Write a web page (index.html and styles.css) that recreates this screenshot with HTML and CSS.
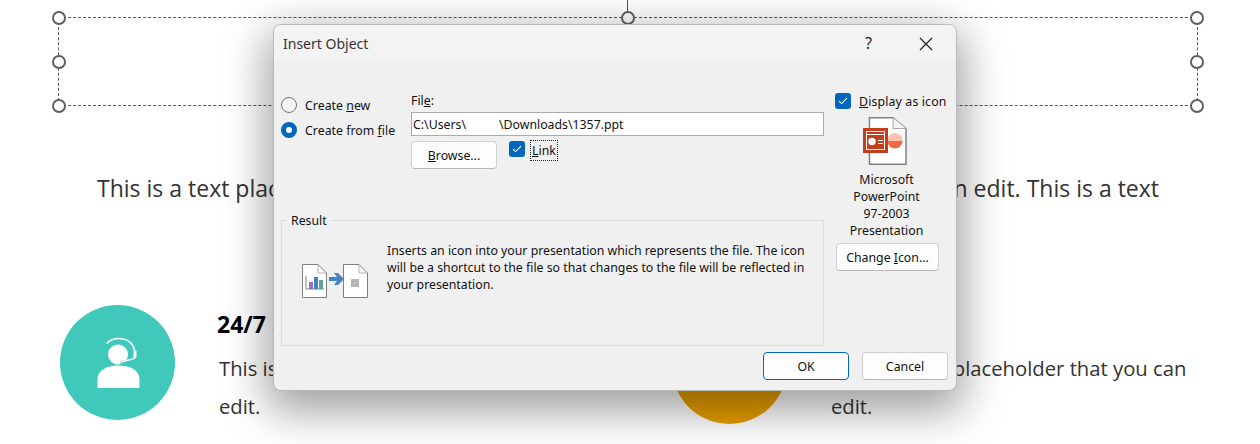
FILE: index.html
```html
<!DOCTYPE html>
<html lang="en">
<head>
<meta charset="utf-8">
<title>Insert Object</title>
<link rel="stylesheet" href="styles.css">
</head>
<body>
<main class="slide">
  <div class="selection"></div>
  <div class="rotate-line"></div>
  <span class="handle h-tl"></span><span class="handle h-tc"></span><span class="handle h-tr"></span>
  <span class="handle h-ml"></span><span class="handle h-mr"></span>
  <span class="handle h-bl"></span><span class="handle h-br"></span>
  <p class="slide-lead"><span>This is a text placeholder</span><span>that you can edit. This is a text</span></p>
  <div class="teal-circle">
    <svg width="46" height="54" viewBox="94.500 335.500 46 54">
      <path d="M97 387.500V379C97 370 106 365 118 365S139 370 139 379V387.500Z" fill="#fff"/>
      <circle cx="117.500" cy="354" r="10" fill="#fff"/>
      <path d="M106 343C109 340 114 338 118 338C127 338 133 343 134 350" fill="none" stroke="#fff" stroke-width="1.600"/>
      <path d="M136 356C134 360 130 361 120 363" fill="none" stroke="#40c9bb" stroke-width="5"/>
      <path d="M135 356C134 358 132 359 130 359L120 361.500" fill="none" stroke="#fff" stroke-width="1.600"/>
      <rect x="133" y="350" width="3" height="7" rx="1" fill="#fff"/>
    </svg>
  </div>
  <h2 class="feature-title">24/7 Support</h2>
  <p class="feature-text ft-left">This is a text placeholder that you can edit.</p>
  <div class="orange-circle"></div>
  <p class="feature-text ft-right">This is a text placeholder that you can edit.</p>
</main>

<section class="dialog">
  <header class="titlebar">
    <span class="title">Insert Object</span>
    <span class="help">?</span>
    <svg class="close" width="14" height="14" viewBox="0 0 14 14"><path d="M1 1L13 13M13 1L1 13" stroke="#222" stroke-width="1.200" fill="none"/></svg>
  </header>
  <div class="body">
    <div class="radios">
      <label class="radio-row"><span class="radio"></span><span class="radio-text">Create <u>n</u>ew</span></label>
      <label class="radio-row"><span class="radio on"></span><span class="radio-text">Create from <u>f</u>ile</span></label>
    </div>
    <div class="file">
      <div class="file-label">Fil<u>e</u>:</div>
      <div class="file-input">C:\Users\<span class="redacted"></span>\Downloads\1357.ppt</div>
      <div class="file-actions">
        <button class="btn browse"><u>B</u>rowse...</button>
        <span class="check"><svg width="10" height="8" viewBox="0 0 10 8"><path d="M1 4.200L3.600 6.600L9 1.200" stroke="#fff" stroke-width="1.100" fill="none"/></svg></span>
        <span class="link-label"><u>L</u>ink</span>
      </div>
    </div>
    <fieldset class="result">
      <legend>Result</legend>
      <div class="result-icon">
        <svg width="68" height="36" viewBox="0 0 68 36">
          <path d="M1.500 1.500H17L25.500 10V34.500H1.500Z" fill="#fff" stroke="#808080"/>
          <path d="M17 1.500V10H25.500" fill="none" stroke="#b0b0b0"/>
          <path d="M5 13V26H23" fill="none" stroke="#808080"/>
          <rect x="8" y="19" width="4" height="7" fill="#9a6fb8"/>
          <rect x="13" y="14" width="4" height="12" fill="#3f82bf"/>
          <rect x="18" y="17" width="4" height="9" fill="#5fa498"/>
          <path d="M28 14h8l-3-4h4l6 6-6 6h-4l3-4h-8z" fill="#4585bf"/>
          <path d="M42.500 1.500H58L66.500 10V34.500H42.500Z" fill="#fff" stroke="#808080"/>
          <path d="M58 1.500V10H66.500" fill="none" stroke="#b0b0b0"/>
          <rect x="50" y="16" width="8" height="8" fill="#b8b8b8"/>
        </svg>
      </div>
      <p class="result-text">Inserts an icon into your presentation which represents the file. The icon will be a shortcut to the file so that changes to the file will be reflected in your presentation.</p>
    </fieldset>
    <aside class="side">
      <label class="display-row">
        <span class="check"><svg width="10" height="8" viewBox="0 0 10 8"><path d="M1 4.200L3.600 6.600L9 1.200" stroke="#fff" stroke-width="1.100" fill="none"/></svg></span>
        <span class="display-text"><u>D</u>isplay as icon</span>
      </label>
      <svg class="ppt" width="44" height="48" viewBox="0 0 44 48">
        <path d="M6.500 0.750H30L43 11.500V47.250H6.500Z" fill="#fff" stroke="#808080" stroke-width="1.500"/>
        <path d="M30 0.750V11.500H43" fill="#f4f4f4" stroke="#a8a8a8"/>
        <circle cx="32" cy="24" r="7.500" fill="#ed6c47"/>
        <path d="M24.500 24a7.500 7.500 0 0 1 15 0Z" fill="#ffc2ac"/>
        <rect x="0" y="11" width="25" height="25" fill="#c43e1c"/>
        <rect x="3.500" y="14.500" width="18" height="18" fill="none" stroke="#fff" stroke-width="1"/>
        <rect x="3" y="17" width="19" height="1" fill="#fff"/>
        <circle cx="9" cy="24.500" r="3.700" fill="#fff"/>
        <path d="M15 23.500h5M15 26.500h5" stroke="#fff"/>
      </svg>
      <div class="ppt-name">Microsoft<br>PowerPoint<br>97-2003<br>Presentation</div>
      <button class="btn change">Change <u>I</u>con...</button>
    </aside>
    <footer class="actions">
      <button class="btn ok">OK</button>
      <button class="btn cancel">Cancel</button>
    </footer>
  </div>
</section>
</body>
</html>
```
FILE: styles.css
```css
html, body {
  margin: 0;
  padding: 0;
  width: 1260px;
  height: 444px;
  overflow: hidden;
  background: #fff;
}
.slide {
  position: relative;
  width: 1260px;
  height: 444px;
  font-family: "Open Sans", sans-serif;
  color: #333;
}
.selection {
  position: absolute;
  left: 58px;
  top: 17px;
  width: 1138px;
  height: 87px;
  border: 1px dashed #555;
}
.rotate-line {
  position: absolute;
  left: 627px;
  top: 0;
  width: 1px;
  height: 12px;
  background: #555;
}
.handle {
  position: absolute;
  width: 10px;
  height: 10px;
  border: 2px solid #606060;
  border-radius: 50%;
  background: #fff;
}
.h-tl { left: 52px; top: 11px; }
.h-tc { left: 621px; top: 11px; }
.h-tr { left: 1190px; top: 11px; }
.h-ml { left: 52px; top: 55px; }
.h-mr { left: 1190px; top: 55px; }
.h-bl { left: 52px; top: 99px; }
.h-br { left: 1190px; top: 99px; }
.slide-lead {
  position: absolute;
  left: 97px;
  top: 173px;
  width: 1062px;
  margin: 0;
  display: flex;
  justify-content: space-between;
  font-size: 23px;
  line-height: 31px;
}
.teal-circle {
  position: absolute;
  left: 60px;
  top: 305px;
  width: 115px;
  height: 115px;
  border-radius: 50%;
  background: #40c9bb;
  display: flex;
  align-items: center;
  justify-content: center;
}
.orange-circle {
  position: absolute;
  left: 672px;
  top: 309px;
  width: 115px;
  height: 115px;
  border-radius: 50%;
  background: #e89f00;
}
.feature-title {
  position: absolute;
  left: 217px;
  top: 309px;
  margin: 0;
  font-size: 23px;
  line-height: 31px;
  font-weight: 700;
  color: #000;
}
.feature-text {
  position: absolute;
  top: 349px;
  width: 370px;
  margin: 0;
  font-size: 20.250px;
  line-height: 38px;
}
.ft-left { left: 219px; }
.ft-right { left: 831px; }

.dialog {
  position: absolute;
  left: 273px;
  top: 24px;
  width: 684px;
  height: 367px;
  box-sizing: border-box;
  border: 1px solid #b9b9b9;
  border-radius: 8px;
  background: #f0f0f0;
  box-shadow: 0 14px 44px 6px rgba(0, 0, 0, 0.38);
  font-family: "Noto Sans", "Open Sans", sans-serif;
  font-size: 12.300px;
  line-height: 17px;
  color: #111;
  overflow: hidden;
}
.titlebar {
  display: flex;
  align-items: center;
  height: 37px;
  padding: 0 23px 0 9px;
  background: #f3f3f3;
}
.title {
  flex: 1;
  font-size: 14px;
  color: #333;
}
.help {
  margin-right: 47px;
  font-size: 15.500px;
  color: #222;
}
.body {
  display: grid;
  grid-template-columns: 130px 413px 124px;
  grid-template-rows: 150px 134px auto;
  padding: 0 8px 0 7px;
}
.radios {
  display: flex;
  flex-direction: column;
  gap: 8px;
  padding-top: 34px;
}
.radio-row {
  display: flex;
  align-items: center;
  gap: 8px;
}
.radio-text {
  position: relative;
  top: 1px;
  letter-spacing: 0.03px;
}
.radio {
  width: 14px;
  height: 14px;
  border: 1px solid #777;
  border-radius: 50%;
  background: #f5f5f5;
}
.radio.on {
  width: 6px;
  height: 6px;
  border: 5px solid #0067c0;
  background: #fff;
}
.file {
  padding-top: 30px;
}
.file-label {
  height: 20px;
}
.file-input {
  box-sizing: border-box;
  height: 24px;
  padding: 2px 1px;
  border: 1px solid #ababab;
  background: #fff;
  line-height: 19px;
}
.redacted {
  display: inline-block;
  width: 33px;
}
.file-actions {
  display: flex;
  align-items: flex-start;
  margin-top: 5px;
}
.btn {
  box-sizing: border-box;
  font: inherit;
  color: #111;
  background: #fdfdfd;
  border: 1px solid #d0d0d0;
  border-bottom-color: #b8b8b8;
  border-radius: 4px;
  padding: 0;
}
.browse {
  width: 86px;
  height: 28px;
}
.check {
  display: flex;
  align-items: center;
  justify-content: center;
  width: 16px;
  height: 16px;
  border-radius: 3px;
  background: #0067c0;
}
.file-actions .check {
  margin: 0 6px 0 12px;
}
.link-label {
  padding: 0 1px;
  height: 19px;
  outline: 1px dotted #222;
  line-height: 19px;
}
.result {
  grid-column: 1 / 3;
  display: flex;
  align-items: flex-start;
  margin: 0;
  padding: 0;
  border: 1px solid #dcdcdc;
  min-width: 0;
}
.result legend {
  margin-left: 5px;
  padding: 0 4px;
}
.result-icon {
  width: 105px;
  padding: 34px 0 0 19px;
  box-sizing: border-box;
}
.result-text {
  width: 426px;
  margin: 13px 0 0;
}
.side {
  grid-column: 3;
  grid-row: 1 / 3;
  display: flex;
  flex-direction: column;
  align-items: flex-start;
  padding: 29px 0 0 11px;
}
.display-row {
  display: flex;
  align-items: center;
  gap: 8px;
  white-space: nowrap;
}
.display-text {
  padding-top: 2px;
  letter-spacing: 0.15px;
}
.ppt {
  margin: 7px 0 0 28px;
}
.ppt-name {
  width: 103px;
  margin-top: 6px;
  text-align: center;
}
.change {
  width: 103px;
  height: 28px;
  margin: 4px 0 0 1px;
}
.actions {
  grid-column: 1 / 4;
  display: flex;
  justify-content: flex-end;
  gap: 13px;
  padding-top: 6px;
}
.ok, .cancel {
  width: 86px;
  height: 28px;
}
.ok {
  border: 1px solid #0067c0;
}
```
